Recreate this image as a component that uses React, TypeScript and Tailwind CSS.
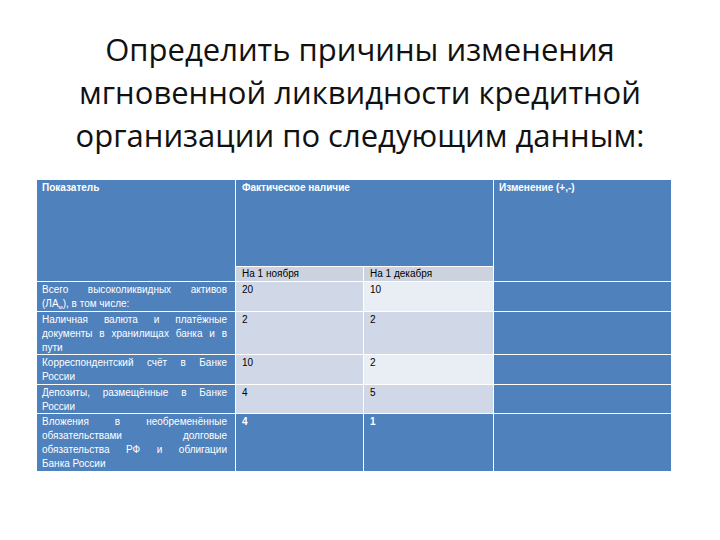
import React from "react";

const BLUE = "bg-[#4f81bd]";

type Line = { t: React.ReactNode; j?: boolean };

function LeftCell({ lines, row }: { lines: Line[]; row: string }) {
  return (
    <div className={`${BLUE} ${row} col-start-1 pl-[5px] pr-[8px] pt-[1px] text-white text-[10px] leading-[14px]`}>
      {lines.map((l, i) => (
        <div key={i} className={l.j ? "text-justify [text-align-last:justify]" : "text-left"}>
          {l.t}
        </div>
      ))}
    </div>
  );
}

export default function App() {
  return (
    <div className="w-[720px] h-[540px] bg-white overflow-hidden" style={{ fontFamily: '"Open Sans", "Liberation Sans", sans-serif' }}>
      <div className="pt-[28px] text-center text-[#111] text-[31px] leading-[43px]">
        <div>Определить причины изменения</div>
        <div>мгновенной ликвидности кредитной</div>
        <div>организации по следующим данным:</div>
      </div>
      <div className="ml-[37px] mt-[23px] w-[634px] grid gap-[1px] bg-white grid-cols-[198px_127px_129px_177px] grid-rows-[86px_14px_29px_42px_29px_28px_57px] text-[10px]" style={{ fontFamily: '"Liberation Sans", "Open Sans", sans-serif' }}>
        <div className={`${BLUE} col-start-1 row-start-1 row-span-2 px-[5px] pt-[1px] text-white font-bold leading-[14px]`}>Показатель</div>
        <div className={`${BLUE} col-start-2 col-span-2 row-start-1 px-[6px] pt-[1px] text-white font-bold leading-[14px]`}>Фактическое наличие</div>
        <div className={`${BLUE} col-start-4 row-start-1 row-span-2 px-[5px] pt-[1px] text-white font-bold leading-[14px]`}>Изменение (+,-)</div>
        <div className="bg-[#cdd3de] col-start-2 row-start-2 px-[6px] text-black leading-[14px]">На 1 ноября</div>
        <div className="bg-[#cdd3de] col-start-3 row-start-2 px-[6px] text-black leading-[14px]">На 1 декабря</div>

        <LeftCell row="row-start-3" lines={[
          { t: "Всего высоколиквидных активов", j: true },
          { t: <>(ЛА<sub className="text-[6px]">м</sub>), в том числе:</> },
        ]} />
        <LeftCell row="row-start-4" lines={[
          { t: "Наличная валюта и платёжные", j: true },
          { t: "документы в хранилищах банка и в", j: true },
          { t: "пути" },
        ]} />
        <LeftCell row="row-start-5" lines={[
          { t: "Корреспондентский счёт в Банке", j: true },
          { t: "России" },
        ]} />
        <LeftCell row="row-start-6" lines={[
          { t: "Депозиты, размещённые в Банке", j: true },
          { t: "России" },
        ]} />
        <LeftCell row="row-start-7" lines={[
          { t: "Вложения в необременённые", j: true },
          { t: "обязательствами долговые", j: true },
          { t: "обязательства РФ и облигации", j: true },
          { t: "Банка России" },
        ]} />

        <div className="bg-[#d0d8e8] col-start-2 row-start-3 px-[6px] pt-[1px] text-black leading-[14px]">20</div>
        <div className="bg-[#e9edf4] col-start-3 row-start-3 px-[6px] pt-[1px] text-black leading-[14px]">10</div>
        <div className="bg-[#d0d8e8] col-start-2 row-start-4 px-[6px] pt-[1px] text-black leading-[14px]">2</div>
        <div className="bg-[#d0d8e8] col-start-3 row-start-4 px-[6px] pt-[1px] text-black leading-[14px]">2</div>
        <div className="bg-[#d0d8e8] col-start-2 row-start-5 px-[6px] pt-[1px] text-black leading-[14px]">10</div>
        <div className="bg-[#e9edf4] col-start-3 row-start-5 px-[6px] pt-[1px] text-black leading-[14px]">2</div>
        <div className="bg-[#d0d8e8] col-start-2 row-start-6 px-[6px] pt-[1px] text-black leading-[14px]">4</div>
        <div className="bg-[#d0d8e8] col-start-3 row-start-6 px-[6px] pt-[1px] text-black leading-[14px]">5</div>
        <div className={`${BLUE} col-start-2 row-start-7 px-[6px] pt-[1px] text-white font-bold leading-[14px]`}>4</div>
        <div className={`${BLUE} col-start-3 row-start-7 px-[6px] pt-[1px] text-white font-bold leading-[14px]`}>1</div>

        <div className={`${BLUE} col-start-4 row-start-3`} />
        <div className={`${BLUE} col-start-4 row-start-4`} />
        <div className={`${BLUE} col-start-4 row-start-5`} />
        <div className={`${BLUE} col-start-4 row-start-6`} />
        <div className={`${BLUE} col-start-4 row-start-7`} />
      </div>
    </div>
  );
}
